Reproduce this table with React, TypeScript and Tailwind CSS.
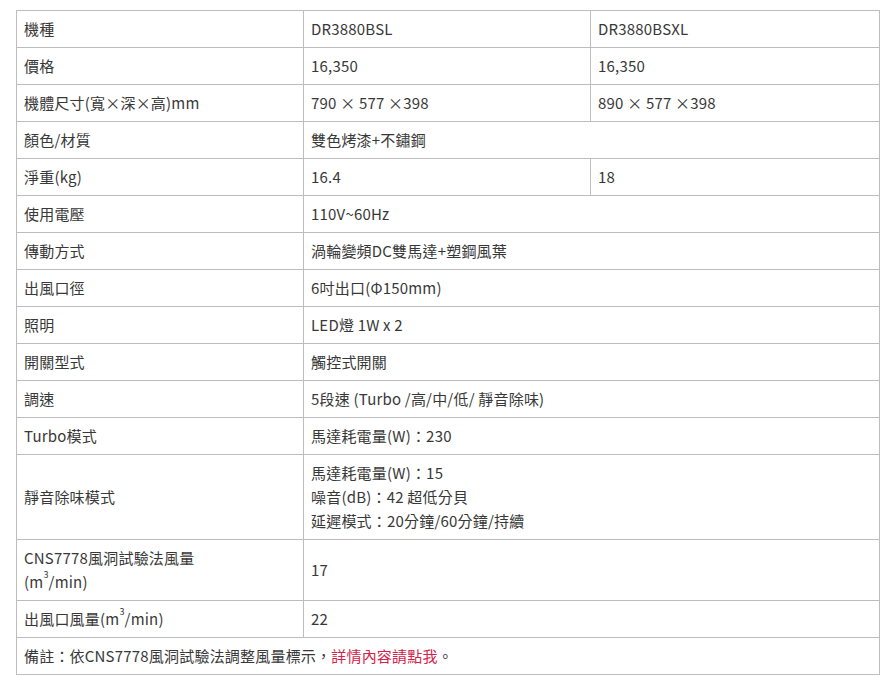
import React from 'react';

type Row = { label: React.ReactNode; cells: React.ReactNode[] };

const rows: Row[] = [
  { label: '機種', cells: ['DR3880BSL', 'DR3880BSXL'] },
  { label: '價格', cells: ['16,350', '16,350'] },
  { label: '機體尺寸(寬×深×高)mm', cells: ['790 × 577 ×398', '890 × 577 ×398'] },
  { label: '顏色/材質', cells: ['雙色烤漆+不鏽鋼'] },
  { label: '淨重(kg)', cells: ['16.4', '18'] },
  { label: '使用電壓', cells: ['110V~60Hz'] },
  { label: '傳動方式', cells: ['渦輪變頻DC雙馬達+塑鋼風葉'] },
  { label: '出風口徑', cells: ['6吋出口(Φ150mm)'] },
  { label: '照明', cells: ['LED燈 1W x 2'] },
  { label: '開關型式', cells: ['觸控式開關'] },
  { label: '調速', cells: ['5段速 (Turbo /高/中/低/ 靜音除味)'] },
  { label: 'Turbo模式', cells: ['馬達耗電量(W)：230'] },
  {
    label: '靜音除味模式',
    cells: [
      <>
        馬達耗電量(W)：15
        <br />
        噪音(dB)：42 超低分貝
        <br />
        延遲模式：20分鐘/60分鐘/持續
      </>,
    ],
  },
  {
    label: (
      <>
        CNS7778風洞試驗法風量
        <br />
        (m<sup className="text-[9px] align-[6px]">3</sup>/min)
      </>
    ),
    cells: ['17'],
  },
  {
    label: (
      <>
        出風口風量(m<sup className="text-[9px] align-[6px]">3</sup>/min)
      </>
    ),
    cells: ['22'],
  },
];

const cell = 'border border-[#bdbdbd] px-[7px] py-[6px] align-middle text-left font-normal';

const App: React.FC = () => {
  return (
    <div
      className="min-h-screen bg-white pt-[10px] pl-[16px] text-[15px] leading-[24px] tracking-[0.2px] text-[#383838]"
      style={{ fontFamily: '"Noto Sans CJK TC", "Noto Sans", sans-serif' }}
    >
      <table className="w-[863px] table-fixed border-collapse">
        <colgroup>
          <col className="w-[287px]" />
          <col className="w-[287px]" />
          <col className="w-[289px]" />
        </colgroup>
        <tbody>
          {rows.map((r, i) => (
            <tr key={i}>
              <td className={cell}>{r.label}</td>
              {r.cells.length === 2 ? (
                <>
                  <td className={cell}>{r.cells[0]}</td>
                  <td className={cell}>{r.cells[1]}</td>
                </>
              ) : (
                <td className={cell} colSpan={2}>
                  {r.cells[0]}
                </td>
              )}
            </tr>
          ))}
          <tr>
            <td className={cell} colSpan={3}>
              備註：依CNS7778風洞試驗法調整風量標示，
              <a className="text-[#d3234b]">詳情內容請點我</a>。
            </td>
          </tr>
        </tbody>
      </table>
    </div>
  );
};

export default App;
